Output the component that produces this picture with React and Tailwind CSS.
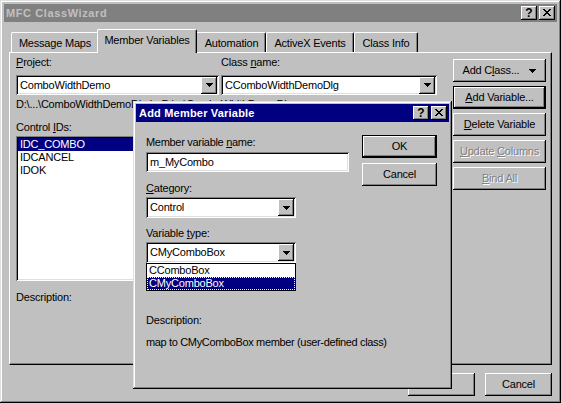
import React from "react";

const RAISED = "shadow-[inset_-1px_-1px_0_#000,inset_1px_1px_0_#fff,inset_-2px_-2px_0_#808080]";
const SUNKEN = "shadow-[inset_1px_1px_0_#808080,inset_-1px_-1px_0_#fff,inset_2px_2px_0_#000,inset_-2px_-2px_0_#dfdfdf]";
const FRAME = "shadow-[inset_-1px_-1px_0_#000,inset_1px_1px_0_#dfdfdf,inset_-2px_-2px_0_#808080,inset_2px_2px_0_#fff]";

function Arrow() {
  return (
    <svg width="7" height="4" viewBox="0 0 7 4" shapeRendering="crispEdges">
      <rect x="0" y="0" width="7" height="1" fill="#000" />
      <rect x="1" y="1" width="5" height="1" fill="#000" />
      <rect x="2" y="2" width="3" height="1" fill="#000" />
      <rect x="3" y="3" width="1" height="1" fill="#000" />
    </svg>
  );
}

function CloseGlyph() {
  const px = [
    [0, 0, 2], [6, 0, 2],
    [1, 1, 2], [5, 1, 2],
    [2, 2, 4],
    [3, 3, 2],
    [2, 4, 4],
    [1, 5, 2], [5, 5, 2],
    [0, 6, 2], [6, 6, 2],
  ];
  return (
    <svg width="8" height="7" viewBox="0 0 8 7" shapeRendering="crispEdges">
      {px.map(([x, y, w], i) => (
        <rect key={i} x={x} y={y} width={w} height="1" fill="#000" />
      ))}
    </svg>
  );
}

function CapBtns() {
  return (
    <div className="flex items-center gap-[2px]">
      <div className={`w-[16px] h-[14px] bg-[#c0c0c0] ${RAISED} flex items-center justify-center text-[12px] font-bold leading-none text-black pb-[1px] tracking-normal`}>
        ?
      </div>
      <div className={`w-[16px] h-[14px] bg-[#c0c0c0] ${RAISED} flex items-center justify-center pb-[1px]`}>
        <CloseGlyph />
      </div>
    </div>
  );
}

function Btn({ children, className = "", def = false, disabled = false }) {
  return (
    <div className={`bg-[#c0c0c0] ${def ? "border border-black" : ""} ${className}`}>
      <div
        className={`w-full h-full flex items-center justify-center leading-[13px] ${RAISED} ${
          disabled ? "text-[#808080] [text-shadow:1px_1px_0_#fff]" : "text-black"
        }`}
      >
        {children}
      </div>
    </div>
  );
}

function Combo({ text, className = "" }) {
  return (
    <div className={`bg-white ${SUNKEN} flex items-center pl-[4px] pr-[2px] ${className}`}>
      <span className="flex-1 whitespace-nowrap overflow-hidden leading-[13px]">{text}</span>
      <div className={`w-[16px] h-[17px] bg-[#c0c0c0] ${RAISED} flex items-center justify-center`}>
        <Arrow />
      </div>
    </div>
  );
}

function U({ children }) {
  return <span className="underline underline-offset-[1px]">{children}</span>;
}

export default function App() {
  return (
    <div className="w-[561px] h-[403px] overflow-hidden bg-[#c0c0c0] font-['Liberation_Sans',Arial,sans-serif] text-[11px] leading-[13px] tracking-[-0.2px] text-black">
      <div className={`relative w-[561px] h-[403px] p-[4px] flex flex-col ${FRAME}`}>
        {/* Title bar */}
        <div className="h-[18px] bg-[#808080] flex items-center justify-between pl-[2px] pr-[2px]">
          <span className="font-bold text-[#c0c0c0] text-[11px] tracking-[0.6px]">MFC ClassWizard</span>
          <CapBtns />
        </div>

        {/* Tabs */}
        <div className="mt-[7px] ml-[7px] h-[23px] flex items-end">
          <div className="w-[88px] h-[20px] border-t border-l border-white border-r border-r-black rounded-t-[2px] shadow-[inset_-1px_0_0_#808080] flex items-center justify-center pt-[1px]">
            Message Maps
          </div>
          <div className="relative z-10 -mx-[2px] w-[100px] h-[24px] -mb-[1px] bg-[#c0c0c0] border-t border-l border-white border-r border-r-black rounded-t-[2px] shadow-[inset_-1px_0_0_#808080] flex items-start justify-center pt-[4px]">
            Member Variables
          </div>
          <div className="w-[71px] h-[20px] border-t border-l border-white border-r border-r-black rounded-t-[2px] shadow-[inset_-1px_0_0_#808080] flex items-center justify-center pt-[1px] pl-[2px]">
            Automation
          </div>
          <div className="w-[88px] h-[20px] border-t border-l border-white border-r border-r-black rounded-t-[2px] shadow-[inset_-1px_0_0_#808080] flex items-center justify-center pt-[1px]">
            ActiveX Events
          </div>
          <div className="w-[64px] h-[20px] border-t border-l border-white border-r border-r-black rounded-t-[2px] shadow-[inset_-1px_0_0_#808080] flex items-center justify-center pt-[1px]">
            Class Info
          </div>
        </div>

        {/* Tab panel */}
        <div className="ml-[5px] w-[543px] h-[313px] border border-white border-r-black border-b-black shadow-[inset_-1px_-1px_0_#808080] flex pl-[6px]">
          <div className="w-[430px] flex flex-col">
            <div className="mt-[3px] flex gap-[2px]">
              <div className="w-[203px] flex flex-col">
                <div className="h-[13px]">
                  <U>P</U>roject:
                </div>
                <Combo className="mt-[6px] w-[203px] h-[20px]" text="ComboWidthDemo" />
              </div>
              <div className="w-[216px] flex flex-col">
                <div className="h-[13px]">
                  Class <U>n</U>ame:
                </div>
                <Combo className="mt-[6px] w-[216px] h-[20px]" text="CComboWidthDemoDlg" />
              </div>
            </div>
            <div className="mt-[3px] h-[13px] whitespace-nowrap">
              D:\...\ComboWidthDemoDlg.h, D:\...\ComboWidthDemoDlg.cpp
            </div>
            <div className="mt-[10px] h-[13px]">
              Control <U>I</U>Ds:
            </div>
            <div className={`mt-[2px] w-[430px] h-[145px] bg-white ${SUNKEN} p-[2px] flex flex-col`}>
              <div className="h-[13px] bg-[#000080] text-white pl-[2px]">IDC_COMBO</div>
              <div className="h-[13px] pl-[2px]">IDCANCEL</div>
              <div className="h-[13px] pl-[2px]">IDOK</div>
            </div>
            <div className="mt-[10px] h-[13px]">Description:</div>
          </div>

          <div className="ml-[7px] mt-[6px] w-[93px] flex flex-col gap-[4px]">
            <Btn className="h-[23px]">
              <span>
                Add C<U>l</U>ass...
              </span>
              <span className="ml-[10px] mt-[1px]">
                <Arrow />
              </span>
            </Btn>
            <Btn def className="h-[23px]">
              <span>
                <U>A</U>dd Variable...
              </span>
            </Btn>
            <Btn className="h-[23px]">
              <span>
                <U>D</U>elete Variable
              </span>
            </Btn>
            <Btn disabled className="h-[23px]">
              <span>
                <U>U</U>pdate <U>C</U>olumns
              </span>
            </Btn>
            <Btn disabled className="h-[23px]">
              <span>
                <U>B</U>ind All
              </span>
            </Btn>
          </div>
        </div>

        {/* Bottom buttons */}
        <div className="mt-[8px] ml-[5px] w-[543px] flex justify-end gap-[10px]">
          <Btn className="w-[67px] h-[23px]">OK</Btn>
          <Btn className="w-[67px] h-[23px]">Cancel</Btn>
        </div>

        {/* Add Member Variable dialog */}
        <div className={`absolute left-[133px] top-[101px] z-20 w-[319px] h-[288px] bg-[#c0c0c0] ${FRAME} p-[3px] flex flex-col`}>
          <div className="h-[18px] bg-[#000080] flex items-center justify-between pl-[3px] pr-[2px]">
            <span className="text-white font-bold text-[11px] tracking-[0.2px]">Add Member Variable</span>
            <CapBtns />
          </div>
          <div className="flex pl-[10px]">
            <div className="w-[203px] flex flex-col">
              <div className="mt-[14px] h-[13px] whitespace-nowrap tracking-[-0.3px]">
                Member variable <U>n</U>ame:
              </div>
              <div className={`mt-[3px] h-[20px] w-[203px] bg-white ${SUNKEN} flex items-center pl-[4px]`}>
                m_MyCombo
              </div>
              <div className="mt-[10px] h-[13px]">
                <U>C</U>ategory:
              </div>
              <Combo className="mt-[2px] w-[150px] h-[21px]" text="Control" />
              <div className="mt-[9px] h-[13px]">
                Variable <U>t</U>ype:
              </div>
              <div className="relative mt-[2px] w-[150px] h-[21px]">
                <Combo className="w-[150px] h-[21px]" text="CMyComboBox" />
                <div className="absolute left-0 top-[21px] w-[150px] h-[28px] bg-white border border-black flex flex-col">
                  <div className="h-[13px] pl-[2px]">CComboBox</div>
                  <div className="h-[13px] pl-[1px] bg-[#000080] text-white border border-dotted border-[#ffffc0] leading-[11px]">
                    CMyComboBox
                  </div>
                </div>
              </div>
              <div className="mt-[51px] h-[13px]">Description:</div>
              <div className="mt-[9px] h-[13px] whitespace-nowrap tracking-[-0.35px]">
                map to CMyComboBox member (user-defined class)
              </div>
            </div>
            <div className="ml-[13px] mt-[13px] w-[75px] flex flex-col gap-[5px]">
              <Btn def className="h-[23px]">
                OK
              </Btn>
              <Btn className="h-[23px]">Cancel</Btn>
            </div>
          </div>
        </div>
      </div>
    </div>
  );
}
